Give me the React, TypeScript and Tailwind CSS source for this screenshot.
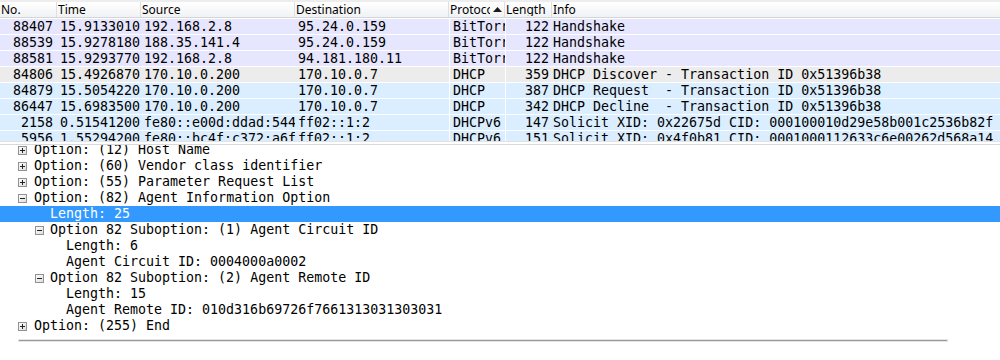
import { memo } from "react"
import clsx from "clsx"

type Packet = {
	no: string
	time: string
	source: string
	destination: string
	protocol: string
	length: string
	info: string
	kind: "tcp" | "udp" | "selected"
}

const packets: Packet[] = [
	{ no: "88407", time: "15.9133010", source: "192.168.2.8", destination: "95.24.0.159", protocol: "BitTorrent", length: "122", info: "Handshake", kind: "tcp" },
	{ no: "88539", time: "15.9278180", source: "188.35.141.4", destination: "95.24.0.159", protocol: "BitTorrent", length: "122", info: "Handshake", kind: "tcp" },
	{ no: "88581", time: "15.9293770", source: "192.168.2.8", destination: "94.181.180.11", protocol: "BitTorrent", length: "122", info: "Handshake", kind: "tcp" },
	{ no: "84806", time: "15.4926870", source: "170.10.0.200", destination: "170.10.0.7", protocol: "DHCP", length: "359", info: "DHCP Discover - Transaction ID 0x51396b38", kind: "selected" },
	{ no: "84879", time: "15.5054220", source: "170.10.0.200", destination: "170.10.0.7", protocol: "DHCP", length: "387", info: "DHCP Request  - Transaction ID 0x51396b38", kind: "udp" },
	{ no: "86447", time: "15.6983500", source: "170.10.0.200", destination: "170.10.0.7", protocol: "DHCP", length: "342", info: "DHCP Decline  - Transaction ID 0x51396b38", kind: "udp" },
	{ no: "2158", time: "0.51541200", source: "fe80::e00d:ddad:544ff02", destination: "ff02::1:2", protocol: "DHCPv6", length: "147", info: "Solicit XID: 0x22675d CID: 000100010d29e58b001c2536b82f", kind: "udp" },
	{ no: "5956", time: "1.55294200", source: "fe80::bc4f:c372:a6fff02", destination: "ff02::1:2", protocol: "DHCPv6", length: "151", info: "Solicit XID: 0x4f0b81 CID: 0001000112633c6e00262d568a14", kind: "udp" },
]

type TreeLine = {
	level: 0 | 1 | 2
	toggle?: "plus" | "minus"
	text: string
	selected?: boolean
}

const details: TreeLine[] = [
	{ level: 0, toggle: "plus", text: "Option: (12) Host Name" },
	{ level: 0, toggle: "plus", text: "Option: (60) Vendor class identifier" },
	{ level: 0, toggle: "plus", text: "Option: (55) Parameter Request List" },
	{ level: 0, toggle: "minus", text: "Option: (82) Agent Information Option" },
	{ level: 1, text: "Length: 25", selected: true },
	{ level: 1, toggle: "minus", text: "Option 82 Suboption: (1) Agent Circuit ID" },
	{ level: 2, text: "Length: 6" },
	{ level: 2, text: "Agent Circuit ID: 0004000a0002" },
	{ level: 1, toggle: "minus", text: "Option 82 Suboption: (2) Agent Remote ID" },
	{ level: 2, text: "Length: 15" },
	{ level: 2, text: "Agent Remote ID: 010d316b69726f7661313031303031" },
	{ level: 0, toggle: "plus", text: "Option: (255) End" },
]

const mono = "font-['DejaVu_Sans_Mono',monospace] text-[13.3px]"

const HeaderCell = ({ label, className, sorted }: { label: string; className: string; sorted?: boolean }) => (
	<div className={clsx("flex items-center h-full border-r border-[#dedfe1] overflow-hidden pl-[1px]", className)}>
		<span className="overflow-hidden whitespace-nowrap">{label}</span>
		{sorted && (
			<svg className="shrink-0 ml-[3px] mr-[2px]" width="9" height="5" viewBox="0 0 9 5">
				<path d="M0 5 L4.5 0 L9 5 Z" fill="#1a1a1a" />
			</svg>
		)}
	</div>
)

const PacketRow = memo(({ packet }: { packet: Packet }) => (
	<div
		className={clsx("flex h-[16px] border-t border-white leading-[15px] text-black", mono, {
			"bg-[#e7e6ff]": packet.kind === "tcp",
			"bg-[#daeeff]": packet.kind === "udp",
			"bg-[#ececec]": packet.kind === "selected",
		})}>
		<div className="w-[57px] shrink-0 text-right pr-[4px] overflow-hidden whitespace-nowrap">{packet.no}</div>
		<div className="w-[84px] shrink-0 pl-[3px] overflow-hidden whitespace-nowrap">{packet.time}</div>
		<div className="w-[154px] shrink-0 pl-[3px] overflow-hidden whitespace-nowrap">{packet.source}</div>
		<div className="w-[154px] shrink-0 pl-[3px] overflow-hidden whitespace-nowrap">{packet.destination}</div>
		<div className="w-[56px] shrink-0 pl-[3px] border-l border-white overflow-hidden whitespace-nowrap">{packet.protocol}</div>
		<div className="w-[47px] shrink-0 text-right pr-[3px] border-l border-white overflow-hidden whitespace-nowrap">{packet.length}</div>
		<div className="flex-1 pl-[1px] overflow-hidden whitespace-pre">{packet.info}</div>
	</div>
))

PacketRow.displayName = "PacketRow"

const Expander = ({ open }: { open: boolean }) => (
	<svg width="9" height="9" viewBox="0 0 9 9" className="shrink-0">
		<defs>
			<linearGradient id="exp" x1="0" y1="0" x2="1" y2="1">
				<stop offset="0" stopColor="#ffffff" />
				<stop offset="1" stopColor="#dcdcdc" />
			</linearGradient>
		</defs>
		<rect x="0.5" y="0.5" width="8" height="8" fill="url(#exp)" stroke="#919191" />
		<path d="M2 4.5 H7" stroke="#222" strokeWidth="1" />
		{!open && <path d="M4.5 2 V7" stroke="#222" strokeWidth="1" />}
	</svg>
)

const DetailLine = ({ line }: { line: TreeLine }) => {
	const textLeft = line.level === 0 ? "pl-[34px]" : line.level === 1 ? "pl-[50px]" : "pl-[66px]"
	return (
		<div
			className={clsx("relative flex items-center h-[16px] leading-[16px] whitespace-pre", mono, textLeft, {
				"bg-[#3399ff] text-white": line.selected,
				"text-black": !line.selected,
			})}>
			{line.toggle && (
				<span className={clsx("absolute top-[4px]", line.level === 0 ? "left-[18px]" : "left-[35px]")}>
					<Expander open={line.toggle === "minus"} />
				</span>
			)}
			{line.text}
		</div>
	)
}

export default function App() {
	return (
		<div className="w-[1000px] h-[360px] bg-white overflow-hidden flex flex-col">
			<div className="h-[2px] bg-[#ededed] shrink-0" />
			<div className="flex h-[16px] shrink-0 bg-gradient-to-b from-white to-[#f1f2f4] border-b border-[#d5d5d5] text-[12px] text-black font-['Noto_Sans',sans-serif] leading-none">
				<HeaderCell label="No." className="w-[57px]" />
				<HeaderCell label="Time" className="w-[84px]" />
				<HeaderCell label="Source" className="w-[154px]" />
				<HeaderCell label="Destination" className="w-[154px]" />
				<HeaderCell label="Protocol" className="w-[56px]" sorted />
				<HeaderCell label="Length" className="w-[47px]" />
				<HeaderCell label="Info" className="flex-1 border-r-0" />
			</div>
			<div className="h-[123px] shrink-0 overflow-hidden">
				{packets.map((p) => (
					<PacketRow key={p.no} packet={p} />
				))}
			</div>
			<div className="h-[1px] shrink-0 bg-[#e2e2e2]" />
			<div className="h-[3px] shrink-0 bg-white border-b border-[#d9d9d9]" />
			<div className="h-[194px] shrink-0 overflow-hidden">
				<div className="-mt-[3px]">
					{details.map((line, i) => (
						<DetailLine key={i} line={line} />
					))}
				</div>
			</div>
			<div className="flex h-[3px] shrink-0 px-[19px] items-center">
				<div className="w-[928px] h-[1px] bg-[#9a9a9a] shadow-[0_0_0_1px_#e4e4e4]" />
			</div>
		</div>
	)
}
